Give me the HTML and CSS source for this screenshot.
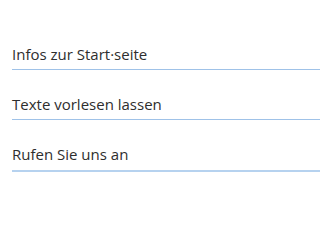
FILE: index.html
```html
<!DOCTYPE html>
<html lang="de">
<head>
<meta charset="utf-8">
<link rel="stylesheet" href="styles.css">
</head>
<body>
<ul class="menu">
  <li class="item">Infos zur Start·seite</li>
  <li class="item">Texte vorlesen lassen</li>
  <li class="item">Rufen Sie uns an</li>
</ul>
</body>
</html>
```
FILE: styles.css
```css
html, body {
  margin: 0;
  padding: 0;
  background: #ffffff;
}
.menu {
  list-style: none;
  margin: 20px 0 0 0;
  padding: 0 0 0 12px;
}
.item {
  font-family: "Open Sans", sans-serif;
  font-weight: 500;
  font-size: 15px;
  line-height: 20px;
  color: #2e2e2e;
  padding: 24px 0 5px 0;
  border-bottom: 1px solid #9fc2e8;
}
.item:last-child {
  border-bottom: 2px solid #b6d2ef;
  padding-bottom: 6px;
}
```
